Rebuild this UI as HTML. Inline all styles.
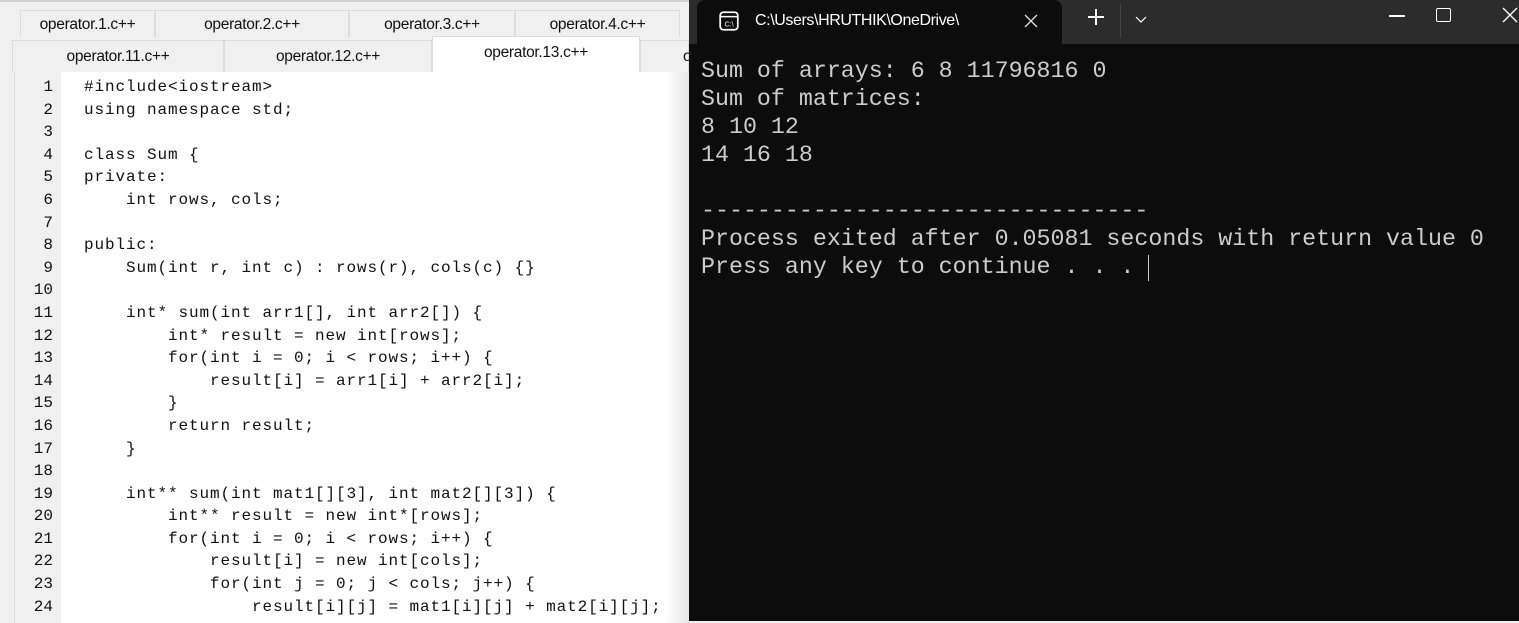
<!DOCTYPE html>
<html><head><meta charset="utf-8"><style>
*{margin:0;padding:0;box-sizing:border-box}
body{width:1519px;height:621px;overflow:hidden;background:#f0f0f0;position:relative;font-family:"Liberation Sans",sans-serif}
.left{position:absolute;left:0;top:0;width:689px;height:621px;background:#f0f0f0;border-top:2px solid #cfcfcf}
.tab{position:absolute;height:27px;font-size:15.5px;color:#111;text-align:center;line-height:27px;background:#f0f0f0;border:1px solid #dcdcdc;border-bottom:none;letter-spacing:-0.3px}
.ed{position:absolute;left:14px;top:70px;width:660px;height:551px;background:#fff;border-left:1px solid #ddd}
.gut{position:absolute;left:0;top:0;width:46px;height:100%;background:#f0f0f0}
pre{font-family:"Liberation Mono",monospace;font-size:16px;line-height:22.6px;color:#111;position:absolute;top:4px}
.ln{left:0;width:38px;text-align:right;font-size:16px}
.code{left:69px;letter-spacing:0.9px}
.term{position:absolute;left:689px;top:0;width:830px;height:621px;background:#0c0c0c}
.tb{position:absolute;left:0;top:0;width:830px;height:44px;background:#2c2c2c}
.ttab{position:absolute;left:8px;top:0;width:365px;height:44px;background:#0c0c0c;border-radius:8px 8px 0 0;color:#fff;font-size:15px}
.out{position:absolute;left:12px;top:57px;font-family:"Liberation Mono",monospace;font-size:23.3px;line-height:28px;color:#cccccc}
</style></head><body>
<div class="left">
<div class="tab" style="left:20px;top:8px;width:135px">operator.1.c++</div>
<div class="tab" style="left:155px;top:8px;width:194px">operator.2.c++</div>
<div class="tab" style="left:349px;top:8px;width:166px">operator.3.c++</div>
<div class="tab" style="left:515px;top:8px;width:165px">operator.4.c++</div>
<div class="tab" style="left:12px;top:38px;width:212px;height:32px;line-height:32px">operator.11.c++</div>
<div class="tab" style="left:224px;top:38px;width:208px;height:32px;line-height:32px">operator.12.c++</div>
<div class="tab" style="left:432px;top:34px;width:208px;height:36px;line-height:32px;background:#fff">operator.13.c++</div>
<div class="tab" style="left:640px;top:38px;width:49px;height:32px;line-height:32px;text-align:left;padding-left:42px">o</div>
<div class="ed"><div class="gut"></div>
<pre class="ln">1
2
3
4
5
6
7
8
9
10
11
12
13
14
15
16
17
18
19
20
21
22
23
24</pre>
<pre class="code">#include&lt;iostream&gt;
using namespace std;

class Sum {
private:
    int rows, cols;

public:
    Sum(int r, int c) : rows(r), cols(c) {}

    int* sum(int arr1[], int arr2[]) {
        int* result = new int[rows];
        for(int i = 0; i &lt; rows; i++) {
            result[i] = arr1[i] + arr2[i];
        }
        return result;
    }

    int** sum(int mat1[][3], int mat2[][3]) {
        int** result = new int*[rows];
        for(int i = 0; i &lt; rows; i++) {
            result[i] = new int[cols];
            for(int j = 0; j &lt; cols; j++) {
                result[i][j] = mat1[i][j] + mat2[i][j];</pre>
</div>
<div style="position:absolute;left:665px;top:70px;width:24px;height:551px;background:linear-gradient(90deg,#fff,#e8e8e8)"></div>
</div>
<div class="term">
<div class="tb"></div>
<div class="ttab">
<svg style="position:absolute;left:21px;top:10px" width="22" height="22" viewBox="0 0 20 20"><rect x="2" y="2" width="16" height="16" rx="3" fill="none" stroke="#fff" stroke-width="1.6"/><line x1="2" y1="6" x2="18" y2="6" stroke="#fff" stroke-width="1.4"/><text x="10" y="15" font-size="6.5" fill="#fff" text-anchor="middle" font-family="Liberation Sans">C:\</text></svg>
<span style="position:absolute;left:58px;top:12px;font-size:16px;letter-spacing:-0.4px">C:\Users\HRUTHIK\OneDrive\</span>
<svg style="position:absolute;left:327px;top:14px" width="14" height="14"><path d="M1 1 L13 13 M13 1 L1 13" stroke="#ddd" stroke-width="1.3"/></svg>
</div>
<div style="position:absolute;left:399px;top:9px;width:16px;height:16px">
<div style="position:absolute;left:0;top:7px;width:16px;height:1.5px;background:#fff"></div>
<div style="position:absolute;left:7px;top:0;width:1.5px;height:16px;background:#fff"></div></div>
<div style="position:absolute;left:431px;top:4px;width:1px;height:34px;background:#444"></div>
<svg style="position:absolute;left:446px;top:16px" width="12" height="8"><path d="M1 1 L6 6 L11 1" stroke="#fff" fill="none" stroke-width="1.2"/></svg>
<div style="position:absolute;left:700px;top:15px;width:16px;height:1.5px;background:#fff"></div>
<div style="position:absolute;left:747px;top:8px;width:15px;height:14px;border:1.5px solid #fff;border-radius:2px"></div>
<svg style="position:absolute;left:813px;top:7px" width="16" height="16"><path d="M1 1 L15 15 M15 1 L1 15" stroke="#fff" stroke-width="1.4"/></svg>
<pre class="out">Sum of arrays: 6 8 11796816 0
Sum of matrices:
8 10 12
14 16 18

--------------------------------
Process exited after 0.05081 seconds with return value 0
Press any key to continue . . . </pre>
<div style="position:absolute;left:459px;top:255px;width:1px;height:26px;background:#ccc"></div>
</div>
</body></html>
